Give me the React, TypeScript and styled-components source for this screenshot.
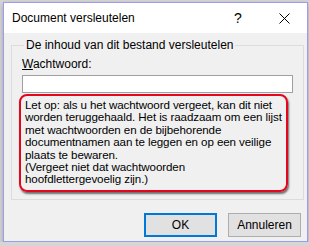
import styled, { createGlobalStyle } from "styled-components";

const GlobalStyle = createGlobalStyle`
	html, body {
		margin: 0;
		padding: 0;
		background: #d6d6d6;
		font-family: "Liberation Sans", Arial, sans-serif;
		font-size: 12px;
		color: #000;
	}
`;

const Window = styled.div`
	margin: 2px 0 0 3px;
	width: 303px;
	height: 238px;
	border: 1px solid #9c9cea;
	background: #f0f0f0;
	display: flex;
	flex-direction: column;
	box-shadow: 0 2px 5px rgba(0, 0, 0, 0.25);
`;

const TitleBar = styled.div`
	height: 30px;
	background: #fff;
	display: flex;
	align-items: center;
	padding-left: 8px;
	font-size: 12px;
`;

const Title = styled.div`
	flex: 1;
`;

const TitleButton = styled.div`
	width: 46px;
	height: 30px;
	display: flex;
	align-items: center;
	justify-content: center;
	font-size: 14px;
`;

const Content = styled.div`
	flex: 1;
	padding: 5px 4px 0 7px;
	display: flex;
	flex-direction: column;
`;

const GroupBox = styled.fieldset`
	margin: 0;
	padding: 4px 10px 4px 6px;
	border: 1px solid #dcdcdc;
	height: 152px;
`;

const Legend = styled.legend`
	padding: 0 2px;
	margin-left: 6px;
	font-size: 12px;
`;

const Label = styled.div`
	padding-left: 4px;
	margin-top: 1px;
	height: 14px;
	line-height: 14px;
`;

const Underline = styled.span`
	text-decoration: underline;
`;

const Input = styled.div`
	margin: 4px 0 0 4px;
	height: 16px;
	border: 1px solid #a0a0a0;
	background: #fff;
`;

const Warning = styled.div`
	margin: 1px 5px 0 1px;
	padding: 3px 4px 4px 4px;
	border: 2.5px solid #e3061c;
	border-radius: 8px;
	box-shadow: 1px 2px 2px rgba(0, 0, 0, 0.55);
	font-size: 11.6px;
	line-height: 12.4px;
	letter-spacing: -0.1px;
`;

const Line = styled.div`
	white-space: nowrap;
`;

const ButtonRow = styled.div`
	display: flex;
	justify-content: flex-end;
	gap: 11px;
	padding: 13px 2px 0 0;
`;

const Button = styled.div<{ $primary?: boolean }>`
	width: ${(p) => (p.$primary ? "69px" : "71px")};
	height: ${(p) => (p.$primary ? "20px" : "22px")};
	border: ${(p) => (p.$primary ? "2px solid #0078d7" : "1px solid #adadad")};
	background: #e1e1e1;
	display: flex;
	align-items: center;
	justify-content: center;
	font-size: 12px;
`;

function CloseIcon() {
	return (
		<svg width="11" height="11" viewBox="0 0 11 11">
			<path d="M0.5 0.5 L10.5 10.5 M10.5 0.5 L0.5 10.5" stroke="#000" strokeWidth="1" />
		</svg>
	);
}

const warningLines = [
	"Let op: als u het wachtwoord vergeet, kan dit niet",
	"worden teruggehaald. Het is raadzaam om een lijst",
	"met wachtwoorden en de bijbehorende",
	"documentnamen aan te leggen en op een veilige",
	"plaats te bewaren.",
	"(Vergeet niet dat wachtwoorden",
	"hoofdlettergevoelig zijn.)",
];

export default function App() {
	return (
		<>
			<GlobalStyle />
			<Window>
				<TitleBar>
					<Title>Document versleutelen</Title>
					<TitleButton>?</TitleButton>
					<TitleButton><CloseIcon /></TitleButton>
				</TitleBar>
				<Content>
					<GroupBox>
						<Legend>De inhoud van dit bestand versleutelen</Legend>
						<Label><Underline>W</Underline>achtwoord:</Label>
						<Input />
						<Warning>
							{warningLines.map((l) => (
								<Line key={l}>{l}</Line>
							))}
						</Warning>
					</GroupBox>
					<ButtonRow>
						<Button $primary>OK</Button>
						<Button>Annuleren</Button>
					</ButtonRow>
				</Content>
			</Window>
		</>
	);
}
